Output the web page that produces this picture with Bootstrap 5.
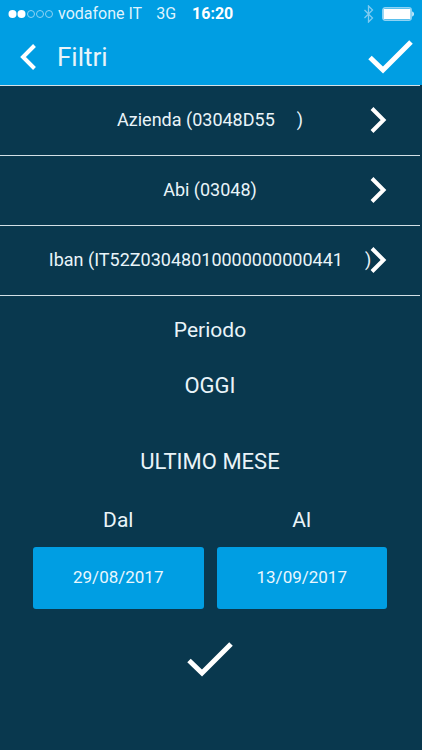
<!DOCTYPE html>
<html lang="it">
<head>
<meta charset="utf-8">
<meta name="viewport" content="width=device-width, initial-scale=1">
<title>Filtri</title>
<link href="https://cdn.jsdelivr.net/npm/bootstrap@5.3.0/dist/css/bootstrap.min.css" rel="stylesheet">
<style>
body { background: #09384e; color: #e9f4f9; font-family: Roboto, "Liberation Sans", sans-serif; }
.topbar { background: #009ee3; }
.status-line { height: 28px; padding: 0 8px; font: 16px/28px Roboto, sans-serif; color: #dff3fd; }
.status-line strong { color: #fff; }
.network { margin-left: 14px; }
.title-line { height: 57px; padding: 0 8px 0 18px; }
.title-line h1 { font-size: 26px; line-height: 32px; font-weight: 400; margin-left: 19px; }
.plain-btn { background: none; border: 0; padding: 0; color: #fff; }
.sheet { padding-right: 2px; }
.filter-row { height: 70px; padding: 0 34px; border-bottom: 1px solid #d3e0e6; color: inherit; font-size: 18px; line-height: 24px; }
.filters { border-top: 1px solid #d3e0e6; }
.filter-label { padding-bottom: 2px; }
.blank { display: inline-block; width: 22px; }
.chevron { right: 33px; top: 20px; }
.caption { font-size: 21px; line-height: 28px; }
.pick { font-size: 22px; line-height: 28px; color: inherit; }
.dates { margin-top: 30px; padding: 0 33px; gap: 13px; }
.dates .caption { margin-bottom: 13px; }
.date-btn { height: 62px; background: #009ee3; color: #e9f7fe; border: 0; border-radius: 3px; font-size: 17px; }
</style>
<script src="https://cdn.jsdelivr.net/npm/bootstrap@5.3.0/dist/js/bootstrap.bundle.min.js" defer></script>
</head>
<body>
<header class="topbar">
  <div class="status-line d-flex align-items-center">
    <svg width="46" height="10" viewBox="0 0 46 10" fill="none" stroke="#8fd3f4" aria-hidden="true">
      <circle cx="4.500" cy="5" r="4" fill="#fff" stroke="none"/><circle cx="13.500" cy="5" r="4" fill="#fff" stroke="none"/>
      <circle cx="23" cy="5" r="3.500"/><circle cx="32" cy="5" r="3.500"/><circle cx="41" cy="5" r="3.500"/>
    </svg>
    <span class="ms-1">vodafone IT</span>
    <span class="network">3G</span>
    <strong class="ms-3">16:20</strong>
    <svg class="ms-auto me-2" width="11" height="18" viewBox="0 0 11 18" fill="none" stroke="#7fcbf1" stroke-width="1.300" aria-hidden="true"><path d="M1.500 5l8 8-4 4V1l4 4-8 8"/></svg>
    <svg width="32" height="14" viewBox="0 0 32 14" aria-hidden="true"><rect x=".7" y=".7" width="28.600" height="12.600" rx="2.500" fill="none" stroke="#8fd3f4" stroke-width="1.300"/><rect x="1.500" y="1.700" width="27" height="10.600" rx="1" fill="#fff"/><path d="M30.300 4.500c2 .5 2 4.500 0 5z" fill="#fff"/></svg>
  </div>
  <div class="title-line d-flex align-items-center">
    <button class="plain-btn d-flex" type="button" aria-label="Indietro"><svg width="20" height="28" viewBox="0 0 20 28" fill="none" stroke="currentColor" stroke-width="4"><path d="M16.500 2.500L5 14l11.500 11.500"/></svg></button>
    <h1 class="mb-0">Filtri</h1>
    <button class="plain-btn d-flex ms-auto" type="button" aria-label="Conferma"><svg width="48" height="36" viewBox="0 0 48 36" fill="none" stroke="currentColor" stroke-width="5"><path d="M4 18.500L17 31 45 3"/></svg></button>
  </div>
</header>
<main class="sheet">
  <nav class="filters" aria-label="Filtri">
    <a href="#azienda" class="filter-row d-flex align-items-center justify-content-center position-relative text-decoration-none">
      <span class="filter-label text-nowrap">Azienda (03048D55<span class="blank"></span>)</span>
      <svg class="chevron position-absolute" width="18" height="28" viewBox="0 0 18 28" fill="none" stroke="#fff" stroke-width="4"><path d="M3 2.500L14.500 14 3 25.500"/></svg>
    </a>
    <a href="#abi" class="filter-row d-flex align-items-center justify-content-center position-relative text-decoration-none">
      <span class="filter-label text-nowrap">Abi (03048)</span>
      <svg class="chevron position-absolute" width="18" height="28" viewBox="0 0 18 28" fill="none" stroke="#fff" stroke-width="4"><path d="M3 2.500L14.500 14 3 25.500"/></svg>
    </a>
    <a href="#iban" class="filter-row d-flex align-items-center justify-content-center position-relative text-decoration-none">
      <span class="filter-label text-nowrap">Iban (IT52Z03048010000000000441<span class="blank"></span>)</span>
      <svg class="chevron position-absolute" width="18" height="28" viewBox="0 0 18 28" fill="none" stroke="#fff" stroke-width="4"><path d="M3 2.500L14.500 14 3 25.500"/></svg>
    </a>
  </nav>
  <section class="d-flex flex-column align-items-center" aria-label="Periodo">
    <h2 class="caption fw-normal mb-0 mt-3 pt-1">Periodo</h2>
    <button class="plain-btn pick mt-4 pt-1" type="button">OGGI</button>
    <button class="plain-btn pick mt-5" type="button">ULTIMO MESE</button>
  </section>
  <div class="dates d-flex">
    <div class="flex-fill w-50 text-center">
      <label class="caption d-block" for="dal">Dal</label>
      <button id="dal" class="btn date-btn w-100" type="button">29/08/2017</button>
    </div>
    <div class="flex-fill w-50 text-center">
      <label class="caption d-block" for="al">Al</label>
      <button id="al" class="btn date-btn w-100" type="button">13/09/2017</button>
    </div>
  </div>
  <div class="d-flex justify-content-center mt-4 pt-2">
    <button class="plain-btn d-flex" type="button" aria-label="Applica filtri"><svg width="48" height="38" viewBox="0 0 48 38" fill="none" stroke="currentColor" stroke-width="5"><path d="M3 19.500L16 32 45 3"/></svg></button>
  </div>
</main>
</body>
</html>
